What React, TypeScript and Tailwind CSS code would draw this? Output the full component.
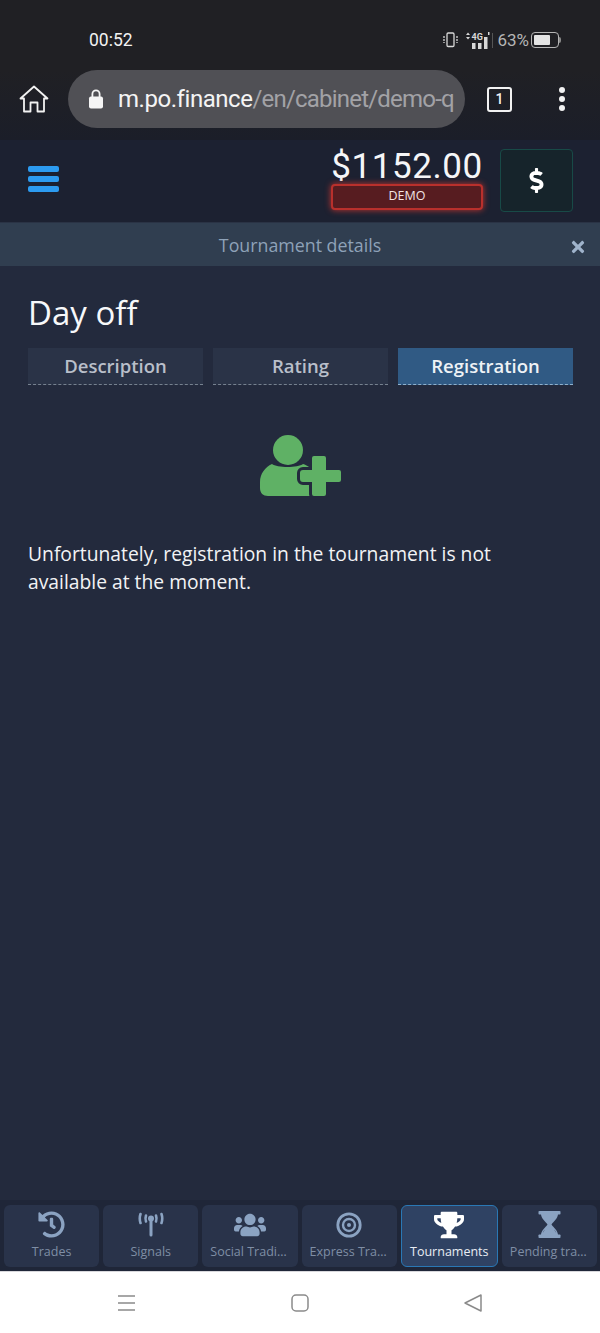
import { ReactNode } from "react";
import { FaDollarSign, FaHistory, FaTimes, FaTrophy, FaUsers } from "react-icons/fa";

const SignalIcon = () => (
  <svg width="26" height="26" viewBox="0 0 26 26" fill="none" stroke="currentColor" strokeLinecap="round">
    <circle cx="13" cy="6.500" r="3" fill="currentColor" stroke="none" />
    <path d="M13 8v15" strokeWidth="3" />
    <path d="M8 3.500C7.300 5.500 7.300 7.500 8 9.500M18 3.500c.7 2 .7 4 0 6" strokeWidth="2.600" />
    <path d="M2.500 2C1.500 5 1.500 8 2.500 11M23.500 2c1 3 1 6 0 9" strokeWidth="2.600" />
  </svg>
);

const TargetIcon = () => (
  <svg width="26" height="26" viewBox="0 0 26 26" fill="none" stroke="currentColor">
    <circle cx="13" cy="13" r="11.200" strokeWidth="2.800" />
    <circle cx="13" cy="13" r="6" strokeWidth="2.400" />
    <circle cx="13" cy="13" r="2" fill="currentColor" stroke="none" />
  </svg>
);

const HourglassIcon = () => (
  <svg width="23" height="27" viewBox="0 0 23 27" fill="currentColor">
    <rect x="0.500" y="0" width="22" height="3.500" rx="0.800" />
    <rect x="0.500" y="23.500" width="22" height="3.500" rx="0.800" />
    <path d="M3 3h17c0 4.500-4.500 7.500-6.500 10.500 2 3 6.500 6 6.500 10.500H3c0-4.500 4.500-7.500 6.500-10.500C7.500 10.500 3 7.500 3 3z" />
    <path d="M7 18.500c-1 1-1.800 2-2.200 3.200h.1zM16 18.500c1 1 1.800 2 2.200 3.200h-.1z" fill="#29334a" />
  </svg>
);

const UserPlusIcon = () => (
  <svg width="82" height="62" viewBox="0 0 82 62" fill="#5fb165">
    <circle cx="28" cy="15" r="15" />
    <path d="M12 29c5 4 26 4 31 0 2 .5 5 2 7 4v28H8c-5 0-8-3-8-8v-6c0-8 5-15 12-18z" />
    <path
      d="M52 23a2 2 0 0 1 2-2h10a2 2 0 0 1 2 2v12h13a2 2 0 0 1 2 2v8a2 2 0 0 1-2 2H66v12a2 2 0 0 1-2 2H54a2 2 0 0 1-2-2V47H43a3 3 0 0 1-3-3v-6a3 3 0 0 1 3-3h9z"
      stroke="#232a3d"
      strokeWidth="6"
      paintOrder="stroke"
    />
  </svg>
);

const NavItem = ({ icon, label, active }: { icon: ReactNode; label: string; active?: boolean }) => (
  <div
    className={`flex min-w-0 flex-1 flex-col items-center rounded-md ${
      active ? "border border-[#2a78b5] bg-[#2f4263] pt-[5px] text-white" : "bg-[#29334a] pt-[6px] text-[#8ba3c2]"
    }`}
  >
    <div className="flex h-[27px] items-center justify-center">{icon}</div>
    <div
      className={`mt-[5px] w-full truncate text-center text-[12.500px] leading-[18px] ${
        active ? "px-[6px] text-[#e8edf3]" : "px-[8px] text-[#7f8ea5]"
      }`}
    >
      {label}
    </div>
  </div>
);

const Tab = ({ label, active }: { label: string; active?: boolean }) => (
  <div
    className={`flex h-[37px] flex-1 items-center justify-center border-b border-dashed text-[18.500px] font-semibold ${
      active ? "border-[#8fb0cc] bg-[#305a84] text-[#eef2f6]" : "border-[#76818f] bg-[#2a3347] text-[#b9bfca]"
    }`}
  >
    {label}
  </div>
);

export default function App() {
  return (
    <div className="flex h-[1333px] w-[600px] flex-col overflow-hidden bg-[#232a3d] font-['Open_Sans',sans-serif]">
      {/* phone status bar + browser bar */}
      <div className="h-[70px] shrink-0 bg-[#202024] pt-[28px] font-['Roboto',sans-serif]">
        <div className="flex items-center pl-[89px] pr-[39px]">
          <span className="text-[17.500px] leading-6 text-[#f2f2f2]">00:52</span>
          <div className="ml-auto flex items-center text-[#bdbdbd]">
            <svg width="15" height="16" viewBox="0 0 15 16" fill="none" stroke="#d8d8d8" strokeWidth="1.300">
              <rect x="4" y="1" width="7" height="13.500" rx="1.200" />
              <path d="M1 4v7M14 4v7" strokeDasharray="2 1" />
            </svg>
            <svg className="ml-[7px]" width="26" height="20" viewBox="0 0 26 20" fill="#d8d8d8">
              <rect x="7" y="13" width="3.500" height="6" />
              <rect x="13" y="13" width="3.500" height="6" />
              <rect x="19" y="7" width="3.500" height="12" />
              <path d="M1 5l2-2.500L5 5zM1 7h4l-2 2.500zM23 2h1.500v3H23z" />
              <text x="6.500" y="9.500" fontSize="9" fontWeight="700" fill="#d8d8d8">
                4G
              </text>
            </svg>
            <span className="ml-[1px] h-[15px] w-px bg-[#555]" />
            <span className="ml-[4px] text-[17px] leading-6 text-[#b5b5b5]">63%</span>
            <div className="ml-[2px] flex h-[16px] w-[28px] items-center rounded-[4px] border border-[#b5b5b5] p-[2px]">
              <div className="h-full w-[16px] rounded-[1px] bg-[#e4e4e4]" />
            </div>
            <div className="h-[6px] w-[2px] rounded-r-sm bg-[#8a8a8a]" />
          </div>
        </div>
      </div>
      <div className="flex h-[70px] shrink-0 items-start bg-gradient-to-b from-[#202024] to-[#1b1e29]">
        <svg className="ml-[19px] mt-[15px] shrink-0" width="30" height="28" viewBox="0 0 30 28" fill="none" stroke="#f2f2f2" strokeWidth="1.800" strokeLinejoin="round">
          <path d="M1.500 13.500L15 1.500l13.500 12h-3.500v13h-6.500v-9h-7v9H5v-13z" />
        </svg>
        <div className="ml-[19px] flex h-[58px] w-[397px] shrink-0 items-center overflow-hidden rounded-[29px] bg-[#505055] pl-[20px]">
          <svg className="shrink-0" width="16" height="22" viewBox="0 0 16 22" fill="#f5f5f5">
            <path d="M3.500 9V6a4.500 4.500 0 0 1 9 0v3h-1.800V6a2.700 2.700 0 0 0-5.400 0v3z" />
            <rect x="1" y="8.500" width="14" height="12" rx="2" />
          </svg>
          <span className="ml-[14px] whitespace-nowrap font-['Roboto',sans-serif] text-[24px] tracking-[-0.45px] text-[#f4f4f4]">
            m.po.finance<span className="tracking-[-0.8px] text-[#a2a2a6]">/en/cabinet/demo-q</span>
          </span>
        </div>
        <div className="ml-[22px] mt-[17px] flex h-[25px] w-[25px] shrink-0 items-center justify-center rounded-[3px] border-2 border-[#f2f2f2] font-['Roboto',sans-serif] text-[14px] font-medium text-[#f2f2f2]">
          1
        </div>
        <div className="ml-[47px] mt-[17px] flex flex-col gap-[3px]">
          <span className="h-[6px] w-[6px] rounded-full bg-[#f2f2f2]" />
          <span className="h-[6px] w-[6px] rounded-full bg-[#f2f2f2]" />
          <span className="h-[6px] w-[6px] rounded-full bg-[#f2f2f2]" />
        </div>
      </div>

      {/* app header */}
      <div className="flex h-[83px] shrink-0 items-center border-b border-[#2a3345] bg-[#1c2131] pb-[3px] pl-[28px] pr-[27px]">
        <div className="mb-[2px] flex w-[31px] flex-col gap-[4px]">
          <span className="h-[6px] rounded-[2px] bg-[#2c9bf0]" />
          <span className="h-[6px] rounded-[2px] bg-[#2c9bf0]" />
          <span className="h-[6px] rounded-[2px] bg-[#2c9bf0]" />
        </div>
        <div className="ml-auto flex w-[152px] flex-col items-center">
          <div className="font-['Roboto',sans-serif] text-[35px] font-normal leading-[34px] tracking-[0.6px] text-[#f5f6f8]">
            $1152.00
          </div>
          <div className="flex h-[26px] w-full items-center justify-center rounded-[4px] border-2 border-[#b9302c] bg-[#571c20] text-[12.500px] text-[#f2e4e4] shadow-[0_0_6px_#c5352f]">
            DEMO
          </div>
        </div>
        <div className="ml-[17px] mt-[2px] flex h-[63px] w-[73px] items-center justify-center rounded-[4px] border border-[#184a47] bg-[#16242b] text-white">
          <FaDollarSign size={25} />
        </div>
      </div>
      <div className="relative flex h-[43px] shrink-0 items-center justify-center bg-[#303e50] pt-[2px] text-[17.800px] text-[#8ea2b8]">
        Tournament details
        <FaTimes size={18} className="absolute right-[13px] top-[15px] text-[#9fb3cb]" />
      </div>

      {/* content */}
      <div className="flex-1 pl-[28px] pr-[27px]">
        <h1 className="mt-[25px] text-[33px] leading-[44px] text-[#f7f8fa]">Day off</h1>
        <div className="mt-[13px] flex gap-[10px]">
          <Tab label="Description" />
          <Tab label="Rating" />
          <Tab label="Registration" active />
        </div>
        <div className="mt-[50px] flex justify-center">
          <UserPlusIcon />
        </div>
        <p className="mt-[43px] text-[19.300px] leading-[28px] text-[#f2f3f5]">
          Unfortunately, registration in the tournament is not available at the moment.
        </p>
      </div>

      {/* bottom tabs */}
      <div className="flex h-[71px] shrink-0 gap-[4px] bg-[#1f2638] pb-[4px] pl-[4px] pr-[3px] pt-[5px]">
        <NavItem icon={<FaHistory size={27} />} label="Trades" />
        <NavItem icon={<SignalIcon />} label="Signals" />
        <NavItem icon={<FaUsers size={32} />} label="Social Trading" />
        <NavItem icon={<TargetIcon />} label="Express Trading" />
        <NavItem icon={<FaTrophy size={30} />} label="Tournaments" active />
        <NavItem icon={<HourglassIcon />} label="Pending trades" />
      </div>

      {/* android nav */}
      <div className="flex h-[62px] shrink-0 items-center justify-center border-t border-[#d8d8dc] bg-white">
        <div className="flex w-[366px] items-center justify-between">
          <svg width="20" height="18" viewBox="0 0 20 18" stroke="#8a8a8a" strokeWidth="1.500">
            <path d="M1 2h17M1 9h17M1 16h17" />
          </svg>
          <svg width="18" height="18" viewBox="0 0 18 18" fill="none" stroke="#8a8a8a" strokeWidth="1.500">
            <rect x="1" y="1" width="16" height="16" rx="4" />
          </svg>
          <svg width="20" height="18" viewBox="0 0 20 18" fill="none" stroke="#8a8a8a" strokeWidth="1.500" strokeLinejoin="round">
            <path d="M18 1v16L2 9z" />
          </svg>
        </div>
      </div>
    </div>
  );
}
